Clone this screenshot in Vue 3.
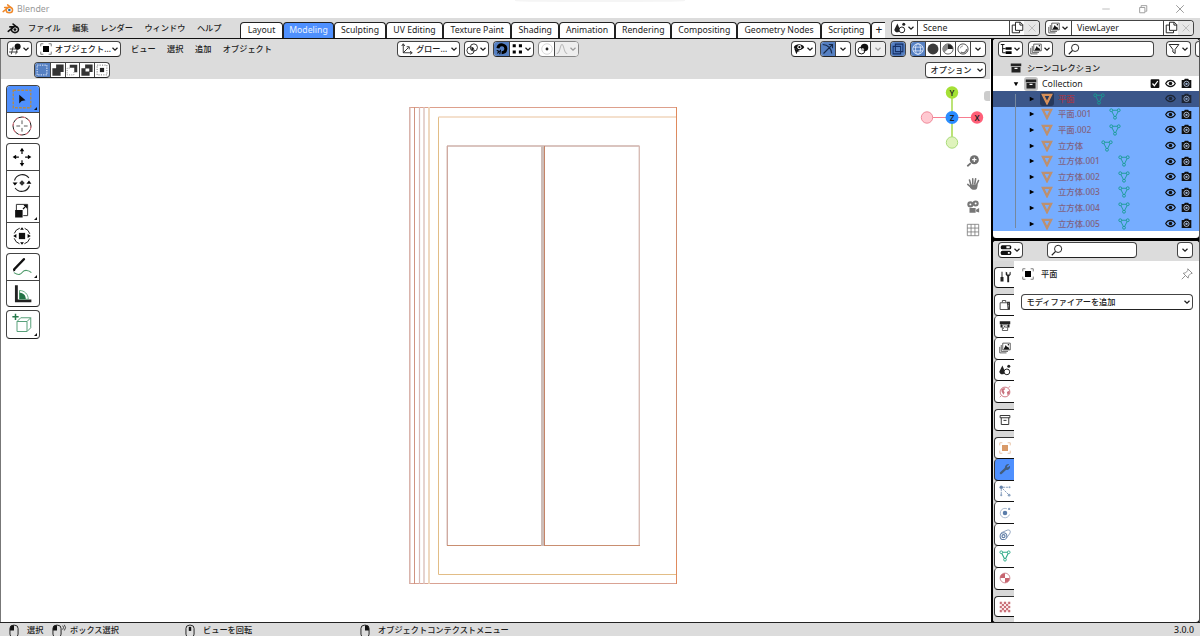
<template>
  <div class="window">
    <div class="titlebar">
      <Icon name="blender" class="logo" />
      <span>Blender</span>
      <i class="notch"></i>
      <div class="controls">
        <Icon name="minimize" />
        <Icon name="restore" />
        <Icon name="close" />
      </div>
    </div>

    <header class="topbar">
      <Icon name="blenderDark" class="app-icon" />
      <nav class="menus ja">
        <span v-for="menu in menus" :key="menu">{{ menu }}</span>
      </nav>
      <div class="tabs">
        <span v-for="tab in tabs" :key="tab.name" class="tab" :class="{ active: tab.name == 'Modeling' }" :style="{ width: tab.width + 'px' }">{{ tab.name }}</span>
      </div>
      <div class="datablocks">
        <div v-for="block in datablocks" :key="block.name" class="ctl datablock">
          <span class="seg drop"><Icon :name="block.icon" /><Icon name="chevron" class="chevron" /></span>
          <span class="seg name">{{ block.name }}</span>
          <span class="seg"><Icon name="copy" /></span>
          <span class="seg disabled"><Icon name="cross" /></span>
        </div>
      </div>
    </header>

    <main>
      <section class="viewport">
        <div class="view-header">
          <div class="row">
            <div class="cluster left ja">
              <span class="ctl drop"><Icon name="editor" /><Icon name="chevron" class="chevron" /></span>
              <span class="ctl mode"><Icon name="object" /><b>オブジェクト...</b><Icon name="chevron" class="chevron" /></span>
              <span class="view-menus">
                <span v-for="menu in viewMenus" :key="menu">{{ menu }}</span>
              </span>
            </div>
            <div class="cluster center ja">
              <span class="ctl orient"><Icon name="axes" /><b>グロー...</b><Icon name="chevron" class="chevron" /></span>
              <span class="ctl drop"><Icon name="pivot" /><Icon name="chevron" class="chevron" /></span>
              <span class="ctl snapping">
                <span class="seg on"><Icon name="magnet" /></span>
                <span class="seg drop wide"><Icon name="snap" /><Icon name="chevron" class="chevron" /></span>
              </span>
              <span class="ctl ghost">
                <span class="seg"><Icon name="proportional" /></span>
                <span class="seg drop wide dim"><Icon name="falloff" /><Icon name="chevron" class="chevron" /></span>
              </span>
            </div>
            <div class="cluster right">
              <span class="ctl drop"><Icon name="visibility" /><Icon name="chevron" class="chevron" /></span>
              <span class="ctl pair"><span class="seg on"><Icon name="gizmo" /></span><span class="seg"><Icon name="chevron" class="chevron" /></span></span>
              <span class="ctl pair"><span class="seg"><Icon name="overlay" /></span><span class="seg dim"><Icon name="chevron" class="chevron" /></span></span>
              <span class="ctl single"><span class="seg on"><Icon name="xray" /></span></span>
              <span class="ctl">
                <span v-for="shade in shading" :key="shade" class="seg" :class="{ on: shade == 'wire' }"><Icon :name="shade" /></span>
                <span class="seg"><Icon name="chevron" class="chevron" /></span>
              </span>
            </div>
          </div>
          <div class="row second">
            <span class="ctl select-modes">
              <span v-for="(mode, i) in selectModes" :key="mode" class="seg" :class="{ on: i == 0 }"><Icon :name="mode" /></span>
            </span>
            <span class="ctl options ja"><b>オプション</b><Icon name="chevron" class="chevron" /></span>
          </div>
        </div>

        <div class="canvas">
          <div class="tools">
            <div v-for="(group, i) in tools" :key="i" class="tool-group">
              <span v-for="tool in group" :key="tool.icon" class="tool" :class="{ active: tool.icon == 'toolSelect', more: tool.more }"><Icon :name="tool.icon" /></span>
            </div>
          </div>

          <svg class="wireframe" viewBox="400 95 290 500" fill="none">
            <path d="M409.5 107.5H677" stroke="#dda08c" />
            <path d="M409.5 583.5H677" stroke="#d9a293" stroke-width="1.2" />
            <path d="M409.8 107V584" stroke="#d8b1a8" stroke-width="1.5" />
            <path d="M414.5 107V584" stroke="#cf9380" />
            <path d="M419.5 107V584" stroke="#d8bab6" stroke-width="1.2" />
            <path d="M424 107V584" stroke="#dcc0ba" stroke-width="1.4" />
            <path d="M429 107V584" stroke="#eed5ba" stroke-width="1.8" />
            <path d="M438.5 117V574.5H676" stroke="#e2bd86" />
            <path d="M438.5 117H676" stroke="#f0d6bd" stroke-width="1.6" />
            <path d="M676.5 107V584" stroke="#cf8f72" />
            <path d="M676.5 107v30M676.5 553v31" stroke="#e08a5c" />
            <path d="M447 146H639.5" stroke="#ceb0aa" stroke-width="1.5" />
            <path d="M447.3 146V545.5" stroke="#cfaaa1" stroke-width="1.4" />
            <path d="M639.3 146V545.5" stroke="#d8bdb6" stroke-width="1.4" />
            <path d="M447 545.5H640" stroke="#c98e70" />
            <path d="M542.5 146V546" stroke="#cdbdb8" stroke-width="3" />
            <path d="M544.5 146V546" stroke="#c58467" />
          </svg>

          <div class="nav">
            <svg class="gizmo" viewBox="918 84 68 68">
              <path d="M952 93v44" stroke="#abdc55" stroke-width="1.6" />
              <path d="M927 117.500h50" stroke="#f77d90" stroke-width="1.200" />
              <circle cx="952" cy="142.500" r="5.700" fill="#dff3bc" stroke="#abdc7c" />
              <circle cx="927" cy="117.500" r="5.700" fill="#ffc9d1" stroke="#f08c9c" />
              <circle cx="952" cy="92.500" r="6.200" fill="#a5e036" />
              <circle cx="977" cy="117.500" r="6.200" fill="#ff5f78" />
              <circle cx="952" cy="117.500" r="6.500" fill="#2a8cff" />
              <text x="952" y="95.500">Y</text>
              <text x="977" y="120.500">X</text>
              <text x="952" y="120.500">Z</text>
            </svg>
            <Icon v-for="name in navIcons" :key="name" :name="name" />
          </div>
          <i class="sidebar-handle"></i>
        </div>
      </section>

      <aside>
        <section class="outliner">
          <div class="outliner-header">
            <span class="ctl drop"><Icon name="tree" /><Icon name="chevron" class="chevron" /></span>
            <span class="ctl drop"><Icon name="layers" /><Icon name="chevron" class="chevron" /></span>
            <span class="ctl search"><Icon name="search" /></span>
            <span class="ctl drop"><Icon name="filter" /><Icon name="chevron" class="chevron" /></span>
            <span class="ctl cut"></span>
          </div>
          <div class="scene-row ja"><Icon name="archive" />シーンコレクション</div>
          <div class="collection-row">
            <Icon name="down" class="arrow" />
            <span class="badge"><Icon name="archive" /></span>
            <span>Collection</span>
            <span class="toggles"><Icon name="check" /><Icon name="eye" /><Icon name="camera" /></span>
          </div>
          <div class="objects">
            <div v-for="(object, i) in objects" :key="object" class="object ja" :class="{ selected: i == 0 }">
              <Icon name="right" class="arrow" />
              <span class="mesh"><Icon name="triangle" /></span>
              <span class="label">{{ object }}</span>
              <Icon name="mesh" class="data" />
              <span class="toggles"><Icon name="eye" /><Icon name="camera" /></span>
            </div>
          </div>
        </section>

        <section class="properties">
          <div class="prop-header">
            <span class="ctl drop"><Icon name="props" /><Icon name="chevron" class="chevron" /></span>
            <span class="ctl search"><Icon name="search" /></span>
            <span class="ctl last"><Icon name="chevron" class="chevron" /></span>
          </div>
          <div class="prop-body">
            <div class="prop-tabs">
              <div v-for="(group, i) in propTabs" :key="i" class="prop-group">
                <span v-for="name in group" :key="name" class="prop-tab" :class="{ active: name == 'wrench' }"><Icon :name="name" /></span>
              </div>
            </div>
            <div class="panel ja">
              <div class="crumb"><Icon name="object" /><b>平面</b><Icon name="pin" class="pin" /></div>
              <div class="ctl add"><b>モディファイアーを追加</b><Icon name="chevron" class="chevron" /></div>
            </div>
          </div>
        </section>
      </aside>
    </main>

    <footer class="ja">
      <span v-for="hint in hints" :key="hint.text" :style="{ width: hint.width + 'px' }"><Icon :name="hint.icon" />{{ hint.text }}</span>
      <b>3.0.0</b>
    </footer>
  </div>
</template>

<script setup>
import { h } from "vue";

const blenderShape = (main, eye) => `<g fill="none" stroke="${main}" stroke-width="2" stroke-linecap="round" stroke-linejoin="round"><path d="M1.500 11.500L8.500 6H3.500M7.500 2.500l5 4"/><ellipse cx="9.800" cy="9.300" rx="4.300" ry="3.700"/></g><circle cx="9.800" cy="9.300" r="1.700" fill="${eye}"/>`;

const corners = (color) => `<path d="M1 4.500V1h3.500M11.500 1H15v3.500M15 11.500V15h-3.500M4.500 15H1v-3.500" fill="none" stroke="${color}"/>`;

const mouse = (button) => `<path d="${button}" fill="#111"/><rect x="3" y="1.500" width="10" height="15" rx="4" fill="none" stroke="#222" stroke-width="1.200"/>`;

const icons = {
  blender: blenderShape("#f0892b", "#2b6ba8"),
  blenderDark: blenderShape("#111", "#111"),
  minimize: '<path d="M3 8h10" stroke="#aaa"/>',
  restore: '<path d="M3.500 6h7v7h-7zM5.500 5.500V3.500h7.500v7.500h-2" fill="none" stroke="#999" stroke-width="1.200"/>',
  close: '<path d="M3 3l10 10M13 3L3 13" stroke="#888" stroke-width="1.100"/>',
  cross: '<path d="M3.500 3.500l9 9M12.500 3.500l-9 9" stroke="#bbb" stroke-width="1.300"/>',
  chevron: '<path d="M3 5.500l5 5 5-5" fill="none" stroke="currentColor" stroke-width="2.400"/>',
  copy: '<path d="M5.500 1.500h6l3 3v7h-9zM11 1.500v3.500h3.500M5 5H1.500v9.500h9V12" fill="none" stroke="#222" stroke-width="1.200"/>',
  scene: '<path d="M4.500 2L8 10c0 5-7.500 5-7.500 0zM6 2l2 4" fill="#222"/><circle cx="13" cy="3" r="2" fill="#222"/><circle cx="10.500" cy="10.500" r="3.800" fill="#fff" stroke="#222" stroke-width="1.300"/>',
  layers: '<path d="M5 1.500h10v9H5zM3 4v8.500h9M1 6.500v8h9" fill="none" stroke="#444" stroke-width="1.100"/><path d="M6 10l3-6 2 3 1-1 2 4z" fill="#111"/><circle cx="12.500" cy="3.800" r="1" fill="#111"/>',
  editor: '<path d="M1 8h12M0 12h12M5.500 5L3 15M11 8l-2 7" stroke="#333" stroke-width="1.200"/><circle cx="11.500" cy="4.500" r="4" fill="#111"/>',
  object: corners("#555") + '<rect x="4" y="4" width="8" height="8" fill="#000"/>',
  axes: '<path d="M3 2v11h11M3 13l7-7M1 4l2-3 2 3M12 11l3 2-3 2M7.500 5H11v3.500" fill="none" stroke="#222" stroke-width="1.200"/>',
  pivot: '<circle cx="6" cy="10" r="4.800" fill="none" stroke="#222" stroke-width="1.200"/><circle cx="10.500" cy="6" r="4.800" fill="none" stroke="#222" stroke-width="1.200"/><circle cx="8.300" cy="8" r="1.300"/>',
  magnet: '<path d="M2.500 7C4 0 14 1.500 13 8.500c-.5 4-3 4.500-5.500 4.500" fill="none" stroke="#000" stroke-width="4"/><path d="M1 10l3 1-2 3M6 9l-1 6" stroke="#000" stroke-width="1.500" fill="none"/>',
  snap: '<path d="M1 1h4.500v4.500H1zM10 1h4.500v4.500H10zM1 10h4.500v4.500H1zM10 10h4.500v4.500H10z" fill="#000"/>',
  proportional: '<circle cx="8" cy="8" r="7" fill="none" stroke="#ccc"/><circle cx="8" cy="8" r="1.900" fill="#222"/>',
  falloff: '<path d="M1 14c5 0 4-12 7-12s2 12 7 12" fill="none" stroke="#bbb" stroke-width="1.400"/>',
  visibility: '<path d="M1 5.500c3-5 11-5 14 0-3 5-11 5-14 0z" fill="#111"/><circle cx="8.500" cy="5.500" r="2.700" fill="#fff"/><circle cx="8.500" cy="5.500" r="1.400"/><path d="M1.500 7l8 3.500-3.500 1L4.500 15z" fill="#111"/>',
  gizmo: '<path d="M1 2c7 0 12 6 12 12M2 14L14 2M9 2h5v5" fill="none" stroke="#16294a" stroke-width="1.500"/>',
  overlay: '<circle cx="6" cy="10" r="4.600" fill="#fff" stroke="#111" stroke-width="1.300"/><circle cx="10" cy="6" r="5" fill="#111"/><circle cx="7.500" cy="8.500" r="2" fill="#bbb"/>',
  xray: '<path d="M4.500 1.500h10v10h-10zM1.500 4.500h10v10h-10z" fill="none" stroke="#142f66" stroke-width="1.400"/>',
  wire: '<circle cx="8" cy="8" r="7" fill="none" stroke="#e6efff" stroke-width="1.100"/><ellipse cx="8" cy="8" rx="3.300" ry="7" fill="none" stroke="#e6efff"/><path d="M1.500 5.500h13M1.500 10.500h13" stroke="#e6efff"/>',
  solid: '<circle cx="8" cy="8" r="7.300" fill="#3c3c3c"/>',
  matte: '<circle cx="8" cy="8" r="6.800" fill="#fff" stroke="#333"/><path d="M8 1.500a6.500 6.500 0 0 0-5 11L8 8h6.500A6.500 6.500 0 0 0 8 1.500z" fill="#888"/><path d="M8 1.500V8h6.500A6.500 6.500 0 0 0 8 1.500z" fill="#222"/>',
  rendered: '<circle cx="8" cy="8" r="6.800" fill="#fff" stroke="#444" stroke-width="1.200"/><path d="M13 8a5 5 0 0 1-8 4" fill="none" stroke="#777" stroke-width="2"/><path d="M4.500 7A3.500 3.500 0 0 1 8 3.800" fill="none" stroke="#777"/>',
  modeSet: '<rect x="1.500" y="1.500" width="13" height="13" fill="none" stroke="#eaf1ff" stroke-width="1.300" stroke-dasharray="1.800 1.450"/>',
  modeExtend: '<path d="M5.500.5h10v10h-4v5h-11v-10h5z" fill="#333"/>',
  modeSubtract: '<path d="M5 1h10v10h-4V5H5z" fill="#333"/><path d="M5 5.500H1.500V14.500H10.500V11" fill="none" stroke="#777" stroke-dasharray="1.500 1.500"/>',
  modeDifference: '<path d="M5.500.5h10v10h-4v5h-11v-10h5z" fill="#333"/><path d="M6 6h5v4H6z" fill="#fff"/>',
  modeIntersect: '<rect x="5.200" y="5.200" width="5.600" height="5.600" fill="#222"/><rect x="1.500" y="1.500" width="13" height="13" fill="none" stroke="#666" stroke-width="1.200" stroke-dasharray="1.500 1.750"/>',
  toolSelect: '<rect x="1" y="1" width="14" height="14" fill="none" stroke="#b18a4c" stroke-width="1.100" stroke-dasharray="2.200 1"/><path d="M5.800 4.500v7l1.900-1.900 3.100-.600z" fill="#111"/>',
  toolCursor: '<circle cx="8" cy="8" r="7.200" fill="none" stroke="#222" stroke-width=".8"/><circle cx="8" cy="8" r="7.200" fill="none" stroke="#e98590" stroke-width=".9" stroke-dasharray="2.800 2.800"/><path d="M8 3.500v3M8 9.500v3M3.500 8h3M9.500 8h3" stroke="#444" stroke-width=".7"/>',
  toolMove: '<path d="M8 .5L9.800 3.300H6.200zM8 15.500l1.800-2.800H6.200zM.5 8l2.800-1.800v3.600zM15.500 8l-2.800-1.800v3.600z"/><path d="M8 3v2.500M8 10.500V13M3 8h2.500M10.500 8H13" stroke="#111"/>',
  toolRotate: '<path d="M2 6a6.500 6.500 0 0 1 11.500-2M14 10a6.500 6.500 0 0 1-11.500 2" fill="none" stroke="#222" stroke-width=".9"/><path d="M.5 7.500h4L2.300 10zM11.500 8.500h4L13.600 6z"/><path d="M8 5.800L10.200 8 8 10.200 5.800 8z" fill="#333"/>',
  toolScale: '<path d="M3.500 8V3.500h9v9H9" fill="none" stroke="#333" stroke-width=".8"/><path d="M2.500 8h6v6h-6z" fill="#111"/><path d="M8.800 7.200L11.500 4.500M9.500 4.200h2.300v2.300" stroke="#111" stroke-width="1" fill="none"/>',
  toolTransform: '<circle cx="8" cy="8" r="6.500" fill="none" stroke="#222" stroke-width=".8" stroke-dasharray="6.200 4" stroke-dashoffset="-2"/><rect x="5.500" y="5.500" width="5" height="5" fill="#111"/><path d="M8 1l1.500 2h-3zM8 15l1.500-2h-3zM1 8l2.500-1.600v3.200zM15 8l-2.500-1.600v3.200z"/>',
  toolAnnotate: '<path d="M1.800 9.800L9.500 1.800" stroke="#111" stroke-width="2" stroke-linecap="round"/><path d="M1 11.500l.3-2 1.500 1.500z"/><path d="M1.500 12.500c4 2.500 5.500 1.500 7-.5s5-1.500 7 .5" fill="none" stroke="#4f9b6b" stroke-width=".9"/>',
  toolMeasure: '<path d="M3.500 1v12.500h12" fill="none" stroke="#222" stroke-width="2.300"/><path d="M6 5.200c4 0 7 3 7 7H6z" fill="#fff" stroke="#3f9860" stroke-width=".6"/><path d="M6 7c3 0 5 2 5 5H6z" fill="#227345"/>',
  toolCube: '<path d="M4 6l3-3h8v8l-3 3H4zM4 6h8v8M12 6l3-3" fill="none" stroke="#58a07a" stroke-width=".8"/><path d="M2.800-.3v5M.3 2.200h5" stroke="#287a4c" stroke-width="1.200"/>',
  zoom: '<circle cx="9.500" cy="6.500" r="5.200" fill="#6f6f6f"/><path d="M9.500 4v5M7 6.500h5" stroke="#fff" stroke-width="1.300"/><path d="M5.500 10.500L1.500 14" stroke="#6f6f6f" stroke-width="2"/>',
  hand: '<g stroke="#777" stroke-width="1.800" stroke-linecap="round"><path d="M5.500 9L4 3.500M7.700 8V2M10 8l1-6M12 9l2.300-5M6 12L2 8.500"/></g><path d="M4.500 8.500h8.800c0 4-1 6-3.300 6H8c-1.500 0-3-1.500-3.500-3z" fill="#777"/>',
  movie: '<g fill="#777"><circle cx="5" cy="5" r="3.500"/><circle cx="11" cy="4" r="3.500"/><path d="M4 9h7v5.500H4zM11.500 11l3.500-1.800v5L11.500 13z"/></g><circle cx="5" cy="5" r="1.100" fill="#fff"/><circle cx="11" cy="4" r="1.100" fill="#fff"/>',
  grid: '<path d="M1.500 1.500h13v13h-13zM5.800 1.500v13M10.200 1.500v13M1.500 5.800h13M1.500 10.200h13" fill="none" stroke="#777" stroke-width=".9"/>',
  tree: '<path d="M1 2h5M3.500 2v11h4M3.500 7.500h4" fill="none" stroke="#111" stroke-width="1.300"/><path d="M7.500 5.500h8v3.500h-8zM7.500 11h8v3.500h-8z"/>',
  search: '<circle cx="9.500" cy="6.500" r="4.800" fill="none" stroke="#222" stroke-width="1.300"/><path d="M6 10l-5 5" stroke="#222" stroke-width="1.500"/>',
  filter: '<path d="M1.500 2h13L9.500 8.500V14l-3-2V8.500z" fill="none" stroke="#222" stroke-width="1.300"/>',
  archive: '<path d="M1 2h14v3.500H1zM2 6.500h12V14H2z" fill="#222"/><path d="M6 8.500h4" stroke="#fff" stroke-width="1.500"/>',
  archiveLine: '<path d="M1.500 2h13v3h-13zM3 5v9h10V5M6 8.500h4" fill="none" stroke="#333" stroke-width="1.300"/>',
  down: '<path d="M2 3h12L8 14z"/>',
  right: '<path d="M2 2l12 6-12 6z"/>',
  check: '<rect x="1" y="1" width="14" height="14" rx="1.500" fill="#111"/><path d="M4 8l3 3.500L12.500 4" fill="none" stroke="#fff" stroke-width="1.900"/>',
  eye: '<path d="M1 8c3-6 11-6 14 0-3 6-11 6-14 0z" fill="none" stroke="#111" stroke-width="1.600"/><circle cx="8" cy="8" r="2.600" fill="#111"/>',
  camera: '<path d="M1 3h3.500l1-2h5l1 2H15v11.500H1z" fill="#111"/><circle cx="8" cy="8.500" r="3.800" fill="none" stroke="#d5e5ff" stroke-width="1.100"/><circle cx="8" cy="8.500" r="1.700" fill="#9cb3d6"/>',
  triangle: '<path d="M2.500 2.500h11L8 13.500z" fill="none" stroke="currentColor" stroke-width="3"/>',
  mesh: '<path d="M3 3h10M3 3l5 10M13 3L8 13" fill="none" stroke="#189c93" stroke-width="1.200"/><g fill="currentColor" stroke="#189c93" stroke-width="1.200"><circle cx="3" cy="3" r="1.900"/><circle cx="13" cy="3" r="1.900"/><circle cx="8" cy="13" r="1.900"/></g>',
  props: '<rect x="1" y="1.500" width="14" height="5.500" rx="2" fill="#111"/><rect x="1" y="9" width="14" height="5.500" rx="2" fill="#111"/><path d="M8.500 3h4.500v2.500H8.500zM10.500 10.500H13V13h-2.500z" fill="#fff"/>',
  pin: '<path d="M9 1l6 6-2 .5-3 3-.5 3L3 7l3-.5 3-3zM6 10l-5 5" fill="none" stroke="#888" stroke-width="1.200"/>',
  tool: '<path d="M4 1v7" stroke="#333" stroke-width="1.400"/><path d="M2 8h4v6H2zM9 1v4l2 2v8h2.500V7l2-2V1l-1.500 1v2.500h-3V2z" fill="#222"/>',
  render: '<path d="M1.500 5h12.500v9H1.500zM9 4.500V2H4.500v2.500" fill="none" stroke="#444" stroke-width="1.200"/><path d="M10.500 3.500h4V14h-3z" fill="#333"/><path d="M12.500 6v6" stroke="#fff" stroke-dasharray="1 1"/>',
  output: '<path d="M1 1.500h14v4H1zM2 6h2v4H2zM12 6h2v4h-2z" fill="#222"/><path d="M4.500 6.500h7v7.500h-7z" fill="#fff" stroke="#333"/><path d="M5.500 12l2-4 1.500 2 2-1" fill="none" stroke="#333"/>',
  world: '<circle cx="8" cy="8" r="6.500" fill="#fff" stroke="#c96c77" stroke-width="1.200"/><path d="M3 4l4-1.500 1.500 1.500-2.500 2 1.500 2.500-1.500 3-2.500-4zM10.500 8L14 6v4l-2.500 2.500z" fill="#ca737e"/><path d="M12.500 2l2.500-1.500M1 15l2-2" stroke="#c96c77"/>',
  objectTab: corners("#e2b38f") + '<rect x="4" y="4" width="8" height="8" fill="#d99a68"/>',
  wrench: '<path d="M2.500 13.500L9 7.500" stroke="#435d7d" stroke-width="3" stroke-linecap="round"/><path d="M13.500 1.500L10.500 4.500l1 1.500 3-2.500c1.300 4-2.500 6.500-5.500 5.500C6 6 9.500.500 13.500 1.500z" fill="#435d7d"/>',
  particles: '<circle cx="3" cy="3" r="2.300" fill="#6784ab"/><path d="M5 3h8M3 5v7M5 5l8 8" stroke="#7c96b8" stroke-width="1.200" stroke-dasharray="3 1"/><g fill="#8aa2c0"><circle cx="14" cy="3" r="1.300"/><circle cx="3" cy="13.500" r="1.400"/><circle cx="13.500" cy="13.500" r="1.800"/></g>',
  physics: '<circle cx="8" cy="8" r="3" fill="#5b7daa"/><path d="M10.500 2.300A6.300 6.300 0 1 0 14 10" fill="none" stroke="#a0b2ca" stroke-width="1.200"/><circle cx="13.500" cy="2.500" r="1.600" fill="#8aa2c0"/>',
  constraint: '<circle cx="6" cy="9.500" r="4.500" fill="none" stroke="#5d7ca5" stroke-width="1.400"/><circle cx="6" cy="9.500" r="2" fill="none" stroke="#5d7ca5" stroke-width="1.600"/><path d="M3 5L11 1.500c4-1 5 2 3 5L10 12" fill="none" stroke="#8199b8" stroke-width="1.200"/>',
  meshTab: '<path d="M3 3h10M3 3l5 10M13 3L8 13" fill="none" stroke="#2eaa88" stroke-width="1.500"/><g fill="#fff" stroke="#2eaa88" stroke-width="1.200"><circle cx="3" cy="3" r="1.800"/><circle cx="13" cy="3" r="1.800"/><circle cx="8" cy="13" r="1.800"/></g>',
  material: '<circle cx="8" cy="8" r="6.500" fill="#fff" stroke="#c9808a" stroke-width="1.200"/><path d="M8 1.500V8l6.500 0A6.500 6.500 0 0 1 8 14.500V8L2.500 4.500A6.500 6.500 0 0 1 8 1.500z" fill="#fff"/><path d="M8 1.500V8H1.500A6.500 6.500 0 0 1 8 1.500z" fill="#d98d96"/><path d="M1.500 8H8V1.500A6.500 6.500 0 0 0 1.500 8zM8 8h6.500A6.500 6.500 0 0 1 8 14.500z" fill="#c76570"/>',
  texture: '<rect x="1" y="1" width="14" height="14" fill="#fbe9ea"/><path d="M1 2.500h14M1 8h14M1 13.500h14" stroke="#c87079" stroke-width="2.800" stroke-dasharray="2.800 2.800"/><path d="M3.800 5.300H15M3.800 10.800H15" stroke="#c87079" stroke-width="2.800" stroke-dasharray="2.800 2.800"/>',
  mouseLeft: mouse("M3 8V5q0-3.500 4-3.500h1V8z"),
  mouseDrag: mouse("M3 8V5q0-3.500 4-3.500h1V8z") + '<path d="M15 2q2 2 0 5M17 1q3 3.500 0 7" fill="none" stroke="#222"/>',
  mouseMiddle: mouse("M6.500 3.500h3v5h-3z"),
  mouseRight: mouse("M13 8V5q0-3.500-4-3.500H8V8z"),
};

const Icon = (props) => h("svg", { viewBox: "0 0 16 16", class: "icon", innerHTML: icons[props.name] });
Icon.props = ["name"];

const menus = ["ファイル", "編集", "レンダー", "ウィンドウ", "ヘルプ"];
const viewMenus = ["ビュー", "選択", "追加", "オブジェクト"];

const tabs = [
  { name: "Layout", width: 43 },
  { name: "Modeling", width: 51 },
  { name: "Sculpting", width: 52 },
  { name: "UV Editing", width: 57 },
  { name: "Texture Paint", width: 68.5 },
  { name: "Shading", width: 47.5 },
  { name: "Animation", width: 56 },
  { name: "Rendering", width: 56.5 },
  { name: "Compositing", width: 65.5 },
  { name: "Geometry Nodes", width: 84 },
  { name: "Scripting", width: 50.5 },
  { name: "+", width: 14 },
];

const datablocks = [
  { name: "Scene", icon: "scene" },
  { name: "ViewLayer", icon: "layers" },
];

const shading = ["wire", "solid", "matte", "rendered"];
const selectModes = ["modeSet", "modeExtend", "modeSubtract", "modeDifference", "modeIntersect"];
const navIcons = ["zoom", "hand", "movie", "grid"];

const tools = [
  [{ icon: "toolSelect", more: true }, { icon: "toolCursor" }],
  [{ icon: "toolMove" }, { icon: "toolRotate" }, { icon: "toolScale", more: true }, { icon: "toolTransform" }],
  [{ icon: "toolAnnotate", more: true }, { icon: "toolMeasure" }],
  [{ icon: "toolCube", more: true }],
];

const objects = ["平面", "平面.001", "平面.002", "立方体", "立方体.001", "立方体.002", "立方体.003", "立方体.004", "立方体.005"];

const propTabs = [
  ["tool"],
  ["render", "output", "layers", "scene", "world"],
  ["archiveLine"],
  ["objectTab", "wrench", "particles", "physics", "constraint", "meshTab", "material"],
  ["texture"],
];

const hints = [
  { icon: "mouseLeft", text: "選択", width: 43 },
  { icon: "mouseDrag", text: "ボックス選択", width: 133 },
  { icon: "mouseMiddle", text: "ビューを回転", width: 175 },
  { icon: "mouseRight", text: "オブジェクトコンテクストメニュー", width: 200 },
];
</script>

<style>
body {
  margin: 0;
  overflow: hidden;
}
</style>

<style scoped>
* {
  box-sizing: border-box;
}

.window {
  width: 1200px;
  height: 636px;
  display: flex;
  flex-direction: column;
  overflow: hidden;
  font: 8.8px/12px "Noto Sans", "Noto Sans CJK JP", sans-serif;
  color: #1c1c1c;
  background: #fff;
  white-space: nowrap;
}

.ja {
  font-size: 8.2px;
  font-weight: 500;
}

b {
  font-weight: inherit;
}

.icon {
  display: block;
  flex: none;
  width: 12px;
  height: 12px;
}

.icon.chevron {
  width: 8px;
  height: 8px;
}

/* title bar */
.titlebar {
  position: relative;
  height: 18px;
  flex: none;
  display: flex;
  align-items: center;
  padding: 0 14px 0 2px;
  gap: 3px;
  color: #999;
  font-size: 8.8px;
}

.notch {
  position: absolute;
  top: 0;
  left: 515px;
  width: 170px;
  height: 2px;
  background: #f5f5f5;
  border-radius: 0 0 50% 50%;
}

.controls {
  margin-left: auto;
  display: flex;
  gap: 25px;
}

.controls .icon {
  width: 12px;
  height: 12px;
}

/* shared controls */
.ctl {
  display: inline-flex;
  align-items: stretch;
  flex: none;
  height: 16px;
  border: 1px solid #444;
  border-bottom: 1.5px solid #222;
  border-radius: 4px;
  background: #fff;
  overflow: hidden;
}

.seg {
  width: 15px;
  display: flex;
  align-items: center;
  justify-content: center;
  border-left: 1px solid #444;
}

.seg:first-child {
  border-left: 0;
}

.on {
  background: #5680c2;
}

.drop {
  width: 25px;
  display: flex;
  align-items: center;
  justify-content: center;
  gap: 1px;
}

.seg.wide {
  width: 24px;
}

.ghost {
  border-color: #888;
}

.dim {
  background: #eee;
  color: #999;
}

/* top bar */
.topbar {
  height: 21px;
  flex: none;
  display: flex;
  border-bottom: 1.5px solid #111;
  background: #dcdcdc;
  padding: 0 6px 0 7px;
}

.app-icon {
  width: 13px;
  height: 13px;
  margin-top: 4px;
}

.menus {
  width: 219.5px;
  display: flex;
  gap: 11.5px;
  padding: 4px 0 0 8px;
}

.tabs {
  display: flex;
  align-items: flex-end;
  width: 646px;
}

.tab {
  height: 16px;
  padding-top: 1px;
  padding-left: 1px;
  flex: none;
  text-align: center;
  font-size: 8.7px;
  border: 1px solid #222;
  border-bottom: 0;
  border-radius: 4px 4px 0 0;
  background: #fff;
}

.tab.active {
  background: #4f90fe;
  color: #e8f1ff;
}

.tab:last-child {
  border-right: 0;
  border-radius: 4px 0 0;
  font-size: 12px;
}

.datablocks {
  display: flex;
  gap: 5px;
  margin: 2px 0 0 auto;
}

.datablock {
  width: 149px;
}

.datablock .name {
  flex: 1;
  justify-content: flex-start;
  padding-left: 5px;
}

.datablock .seg {
  padding-bottom: 1px;
}

.datablock .name + .seg .icon {
  width: 13px;
  height: 13px;
}

.datablock .disabled {
  background: #e7e7e7;
  border-left: 0;
}

main {
  height: 583px;
  flex: none;
  display: flex;
}

/* 3D viewport */
.viewport {
  width: 990px;
  flex: none;
  display: flex;
  flex-direction: column;
  border-left: 1px solid #777;
}

.view-header {
  height: 40px;
  background: #dcdcdc;
  padding: 2px 4.5px 0 6px;
}

.row {
  display: flex;
  height: 21px;
}

.cluster {
  display: flex;
  gap: 4px;
}

.left {
  width: 390px;
}

.view-menus {
  display: flex;
  gap: 11.5px;
  padding: 2px 0 0 6px;
}

.mode,
.orient,
.options,
.add {
  align-items: center;
  justify-content: space-between;
  padding: 0 1px 0 3px;
}

.mode {
  width: 85px;
}

.mode b {
  margin-left: 3px;
}

.orient {
  width: 63px;
}

.snapping {
  width: 41px;
}

.snapping .wide .icon:first-child {
  width: 11px;
}

.right {
  margin-left: auto;
}

.right .pair {
  width: 31px;
}

.right .ctl:last-child {
  width: 76px;
}

.right .single {
  width: 16px;
}

.single .seg {
  flex: 1;
}

.row.second {
  padding-left: 27px;
  justify-content: space-between;
}

.select-modes {
  width: 76px;
}

.options {
  width: 61px;
  padding-left: 5px;
}

.select-modes,
.options {
  margin-top: -.5px;
}

.canvas {
  position: relative;
  flex: 1;
}

.tools {
  width: 34px;
  margin: 6px 0 0 5px;
  display: flex;
  flex-direction: column;
  gap: 3.3px;
}

.tool-group {
  border: 1px solid #444;
  border-bottom: 1.5px solid #222;
  border-radius: 4px;
  overflow: hidden;
}

.tool {
  position: relative;
  height: 26.2px;
  display: flex;
  align-items: center;
  padding-left: 5px;
}

.tool + .tool {
  border-top: 1px solid #444;
}

.tool .icon {
  width: 20px;
  height: 20px;
  overflow: visible;
}

.tool.active {
  background: #4f90fe;
}

.tool.more::after {
  content: "";
  position: absolute;
  right: 2px;
  bottom: 2px;
  border-left: 3px solid transparent;
  border-bottom: 3px solid #111;
}

.wireframe {
  position: absolute;
  left: 399px;
  top: 16px;
  width: 290px;
  height: 500px;
}

.nav {
  position: absolute;
  top: 5px;
  right: 4px;
  width: 68px;
  display: flex;
  flex-direction: column;
  align-items: flex-end;
  gap: 9.2px;
}

.gizmo {
  width: 68px;
  height: 68px;
  margin-bottom: -7.5px;
}

.gizmo text {
  font-size: 8px;
  font-weight: 600;
  text-anchor: middle;
  fill: #222;
}

.nav .icon {
  width: 14px;
  height: 14px;
  margin-right: 6px;
}

.sidebar-handle {
  position: absolute;
  right: 0;
  top: 12px;
  width: 6px;
  height: 10px;
  border-radius: 3px 0 0 3px;
  background: #ccc;
}

/* right column */
aside {
  flex: 1;
  display: flex;
  flex-direction: column;
  margin-left: .5px;
  border-left: 2px solid #000;
  border-right: 1px solid #555;
  background: #000;
  overflow: hidden;
}

.outliner {
  height: 199px;
  background: #fff;
  border-radius: 3px;
  overflow: hidden;
}

.outliner-header {
  height: 21px;
  display: flex;
  padding: 2px 0 0 5.5px;
  background: #dcdcdc;
}

.outliner-header .ctl:nth-child(2) {
  margin-left: 5px;
}

.search {
  width: 90px;
  margin-left: 11px;
  padding-left: 3px;
  align-items: center;
}

.outliner-header .search + .ctl {
  margin-left: 12px;
}

.outliner-header .cut {
  width: 12px;
  margin-left: 4px;
}

.scene-row {
  height: 16px;
  display: flex;
  align-items: center;
  gap: 5px;
  padding-left: 17.5px;
  background: #d8d8d8;
}

.collection-row {
  height: 15px;
  display: flex;
  align-items: center;
  padding-left: 20px;
}

.arrow {
  width: 6px;
  height: 6px;
}

.badge {
  margin: 0 4px 0 5.500px;
  padding: 1px;
  border-radius: 3px;
  background: #c4c4c4;
}

.toggles {
  display: flex;
  gap: 5px;
  margin-left: auto;
  padding-right: 7px;
}

.toggles .icon {
  width: 11px;
  height: 11px;
}

.collection-row .toggles .icon:first-child {
  width: 10px;
}

.objects {
  position: relative;
}

.objects::before {
  content: "";
  position: absolute;
  top: 3px;
  bottom: 3px;
  left: 22.5px;
  width: 1px;
  background: #75889f;
}

.object {
  height: 15.6px;
  display: flex;
  align-items: center;
  padding-left: 36px;
  background: #76adff;
  color: #80627f;
  font-size: 8.4px;
}

.object.selected {
  background: #3b5689;
  color: #a23848;
}

.mesh {
  margin: 0 4px 0 5.500px;
  padding: 1px;
  border-radius: 3px;
  color: #bd906f;
}

.selected .mesh {
  background: #27395c;
  color: #d79059;
}

.object .data {
  margin-left: 18px;
  color: #76adff;
}

.selected .data {
  color: #3b5689;
}

.selected .toggles {
  opacity: .7;
}

/* properties editor */
.properties {
  margin-top: 2.5px;
  flex: 1;
  display: flex;
  flex-direction: column;
  border-radius: 3px;
  background: #fff;
  overflow: hidden;
}

.prop-header {
  height: 20px;
  display: flex;
  padding: 1.5px 6px 0 5.5px;
  background: #dcdcdc;
}

.prop-header .search {
  margin-left: 24px;
}

.prop-header .last {
  width: 16px;
  margin-left: auto;
  align-items: center;
  justify-content: center;
}

.prop-body {
  flex: 1;
  display: flex;
}

.prop-tabs {
  width: 21.5px;
  padding: 6px 0 0 1px;
  display: flex;
  flex-direction: column;
  gap: 6px;
  background: #d8d8d8;
}

.prop-tab {
  height: 21.8px;
  display: flex;
  align-items: center;
  padding-left: 4px;
  border: 1px solid #333;
  border-right: 0;
  border-bottom: 1.5px solid #111;
  border-radius: 4px 0 0 4px;
  background: #fff;
}

.prop-tab + .prop-tab {
  border-top: 0;
}

.prop-tab.active {
  background: #4f90fe;
}

.panel {
  flex: 1;
  padding: 7px 6px 0 6.5px;
}

.crumb {
  height: 12px;
  display: flex;
  align-items: center;
  gap: 7px;
  padding-left: 1.5px;
}

.pin {
  margin-left: auto;
}

.add {
  display: flex;
  margin-top: 14.5px;
  padding-left: 5px;
}

/* status bar */
footer {
  height: 14px;
  flex: none;
  display: flex;
  align-items: center;
  padding: 1px 6px 0 7px;
  border-top: 1px solid #222;
  background: #dcdcdc;
}

footer span {
  display: flex;
  align-items: center;
  gap: 6px;
}

footer .icon {
  width: 14px;
  height: 13px;
  overflow: visible;
}

footer b {
  margin-left: auto;
  font-size: 8.8px;
}
</style>
